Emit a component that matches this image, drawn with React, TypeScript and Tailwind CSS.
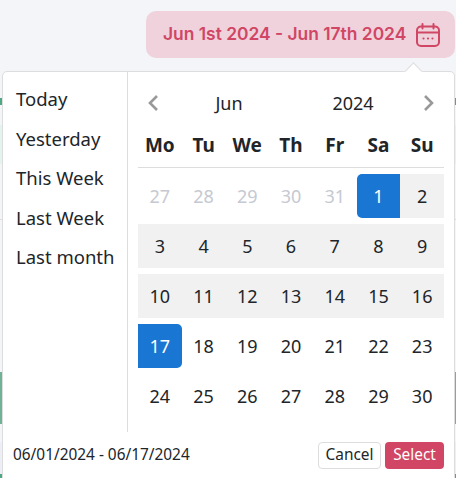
const weekdays = ['Mo', 'Tu', 'We', 'Th', 'Fr', 'Sa', 'Su']
const ranges = ['Today', 'Yesterday', 'This Week', 'Last Week', 'Last month']
const prevMonth = [27, 28, 29, 30, 31]

function dayClass(day: number, muted: boolean) {
  if (muted) return 'text-[#c6c9d1]'
  if (day === 1) return 'bg-[#1976d2] text-white rounded-l-[5px]'
  if (day === 17) return 'bg-[#1976d2] text-white rounded-r-[5px]'
  if (day < 17) return 'bg-[#f1f1f1]'
  return ''
}

function CalendarIcon() {
  return (
    <svg width="24" height="24" viewBox="0 0 24 24" fill="none" stroke="#d14665" strokeWidth="2" strokeLinecap="round">
      <rect x="1" y="3.5" width="22" height="19.5" rx="4" />
      <path d="M1 9.5h22M6.5 1v4.5M17.5 1v4.5" />
      <path d="M7.5 15.5h.01M12 15.5h.01M16.5 15.5h.01" strokeWidth="2.2" />
    </svg>
  )
}

function Chevron({ flip }: { flip?: boolean }) {
  return (
    <svg width="12" height="18" viewBox="0 0 12 18" fill="none" stroke="#999999" strokeWidth="2.6" className={flip ? 'rotate-180' : ''}>
      <path d="M10 2 3 9l7 7" />
    </svg>
  )
}

export default function App() {
  const days = [...prevMonth.map((d) => ({ d, muted: true })), ...Array.from({ length: 30 }, (_, i) => ({ d: i + 1, muted: false }))]

  return (
    <div className="relative w-[456px] h-[478px] overflow-hidden bg-[#f4f5f9] font-['Noto_Sans',sans-serif] text-[#212529]">
      <div className="flex justify-end pt-[11px] pr-px">
        <button className="flex items-center gap-[10px] w-[309px] h-[47px] pl-[17px] rounded-[10px] bg-[#efd2db] text-[#d14665] font-['Inter',sans-serif] font-semibold text-[17.4px] whitespace-nowrap">
          Jun 1st 2024 - Jun 17th 2024
          <CalendarIcon />
        </button>
      </div>

      {/* page behind the popover, only its edges show */}
      <div className="flex flex-col">
        <div className="h-10" />
        <div className="h-[7px] bg-[#4fa884]" />
        <div className="h-5" />
        <div className="h-[39px] bg-[#e3f3ee]" />
        <div className="h-14 border-b border-[#dddddd]" />
        <div className="h-[152px]" />
        <div className="h-[52px] bg-[#6fb296]" />
        <div className="h-[18px]" />
        <div className="h-8 bg-[#eeeef6]" />
        <div className="h-1 bg-[#4fa884]" />
      </div>

      <div className="absolute left-[2px] top-[71px] w-[453px] h-[420px] rounded-[5px] border border-[#dddddd] bg-white">
        <div className="absolute -top-[7px] left-[404px] size-[13px] rotate-45 border-l border-t border-[#dddddd] bg-white" />
        <div className="relative flex h-[360px]">
          <ul className="flex flex-col w-[125px] pl-[13px] pt-[7px] border-r border-[#dddddd] text-[18.5px]">
            {ranges.map((r) => (
              <li key={r} className="h-[39.5px] leading-[39.5px]">{r}</li>
            ))}
          </ul>
          <div className="w-[306px] ml-[10px]">
            <div className="flex items-center h-[60px] pt-[2px] text-[18px]">
              <div className="w-[32px] pl-[9px]"><Chevron /></div>
              <span className="w-[118px] text-center">Jun</span>
              <span className="w-[130px] text-center">2024</span>
              <div className="pl-[5px]"><Chevron flip /></div>
            </div>
            <div className="grid grid-cols-7 h-[36px] border-b border-[#dddddd] text-[19px] font-bold">
              {weekdays.map((w) => (
                <div key={w} className="text-center leading-[27px]">{w}</div>
              ))}
            </div>
            <div className="grid grid-cols-7 gap-y-[6px] mt-[6px] text-[18px]">
              {days.map(({ d, muted }) => (
                <div key={`${d}-${muted}`} className={`h-[44px] flex items-center justify-center ${dayClass(d, muted)}`}>
                  {d}
                </div>
              ))}
            </div>
          </div>
        </div>
        <div className="flex items-center h-[46px] pl-[10px] pr-[10px] text-[15.4px]">
          <span>06/01/2024 - 06/17/2024</span>
          <button className="ml-auto w-[63px] h-[27px] rounded-[4px] border border-[#dddddd] text-[15.4px] leading-none">Cancel</button>
          <button className="ml-[4px] w-[59px] h-[27px] rounded-[4px] bg-[#d14665] text-white text-[15.4px] leading-none">Select</button>
        </div>
      </div>
    </div>
  )
}
